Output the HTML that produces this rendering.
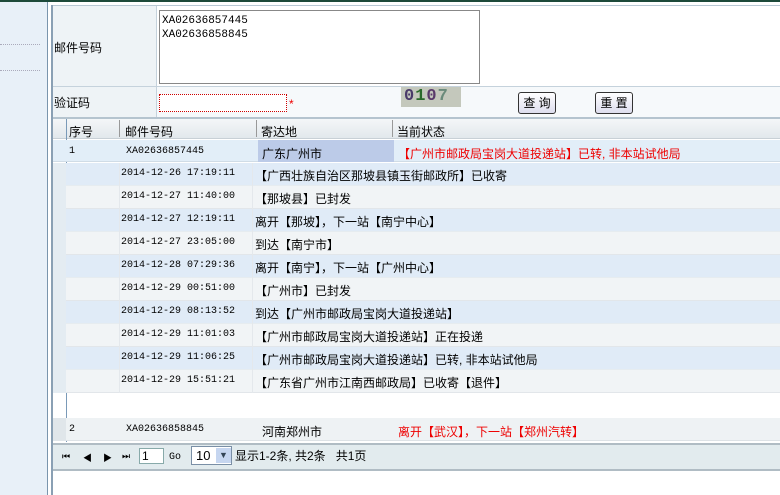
<!DOCTYPE html>
<html><head><meta charset="utf-8"><style>
*{margin:0;padding:0;box-sizing:border-box}
body{width:780px;height:495px;overflow:hidden;background:#fff;font-family:"Liberation Sans","Noto Sans CJK SC",sans-serif;font-size:12px;color:#000;position:relative}
.a{position:absolute}
.mono{font-family:"Liberation Mono","Noto Sans CJK SC",monospace;font-size:10px}
.red{color:#e00}
</style></head><body>
<div class="a" style="left:0;top:0;width:780px;height:2px;background:#1d4a3a"></div>
<div class="a" style="left:0;top:2px;width:47px;height:493px;background:#e8f0f8"></div>
<div class="a" style="left:0;top:44px;width:40px;border-top:1px dotted #aab"></div>
<div class="a" style="left:0;top:70px;width:40px;border-top:1px dotted #aab"></div>
<div class="a" style="left:47px;top:2px;width:1px;height:493px;background:#7a95ad"></div>
<div class="a" style="left:51px;top:5px;width:2px;height:490px;background:#8aa0b4"></div>
<div class="a" style="left:53px;top:5px;width:727px;height:1px;background:#b8c8d4"></div>
<div class="a" style="left:53px;top:6px;width:103px;height:111px;background:#eef3f6"></div>
<div class="a" style="left:156px;top:6px;width:1px;height:111px;background:#c5d2dc"></div>
<div class="a" style="left:53px;top:86px;width:727px;height:1px;background:#c5d2dc"></div>
<div class="a" style="left:157px;top:87px;width:623px;height:30px;background:#f6f9fb"></div>
<div class="a" style="left:54px;top:39px">邮件号码</div>
<div class="a" style="left:54px;top:94px">验证码</div>
<div class="a mono" style="left:159px;top:10px;width:321px;height:74px;border:1px solid #888;background:#fff;padding:3px 2px;line-height:14px;font-size:11px">XA02636857445<br>XA02636858845</div>
<div class="a" style="left:159px;top:94px;width:128px;height:18px;border:1px dotted #c00;background:#fff"></div>
<div class="a red" style="left:289px;top:97px">*</div>
<div class="a" style="left:401px;top:87px;width:60px;height:20px;background:#c4c8bc;font:bold 17px 'Liberation Mono',monospace;letter-spacing:1px;padding-left:3px;line-height:20px"><span style="color:#4a3a6a">0</span><span style="color:#2a6a2a">1</span><span style="color:#5a3a6a">0</span><span style="color:#6a8a7a">7</span></div>
<div class="a" style="left:518px;top:92px;width:38px;height:22px;border:1px solid #333;border-radius:3px;background:linear-gradient(#fff,#dde);text-align:center;line-height:20px">查 询</div>
<div class="a" style="left:595px;top:92px;width:38px;height:22px;border:1px solid #333;border-radius:3px;background:linear-gradient(#fff,#dde);text-align:center;line-height:20px">重 置</div>
<div class="a" style="left:53px;top:117px;width:727px;height:2px;background:#b5c4cf"></div>
<div class="a" style="left:53px;top:119px;width:727px;height:20px;background:linear-gradient(#f4f6f8,#e2e8ec);border-bottom:1px solid #c8d0d6"></div>
<div class="a" style="left:66px;top:119px;width:1px;height:323px;background:#7a9ab8"></div>
<div class="a" style="left:119px;top:120px;width:1px;height:17px;background:#999"></div>
<div class="a" style="left:256px;top:120px;width:1px;height:17px;background:#999"></div>
<div class="a" style="left:392px;top:120px;width:1px;height:17px;background:#999"></div>
<div class="a" style="left:69px;top:123px">序号</div>
<div class="a" style="left:125px;top:123px">邮件号码</div>
<div class="a" style="left:261px;top:123px">寄达地</div>
<div class="a" style="left:397px;top:123px">当前状态</div>
<div class="a" style="left:53px;top:140px;width:727px;height:22px;background:#e2eef8;border-bottom:1px solid #d0dce6"></div>
<div class="a" style="left:258px;top:140px;width:136px;height:22px;background:#bccbe8"></div>
<div class="a mono" style="left:69px;top:146px">1</div>
<div class="a mono" style="left:126px;top:146px">XA02636857445</div>
<div class="a" style="left:262px;top:145px">广东广州市</div>
<div class="a red" style="left:398px;top:145px">【广州市邮政局宝岗大道投递站】已转, 非本站试他局</div>
<div class="a" style="left:53px;top:163px;width:727px">
<div style="height:23px;background:#e0ebf7;border-bottom:1px solid #e6ecf0;position:relative"><span class="a mono" style="left:68px;top:5px">2014-12-26 17:19:11</span><span class="a" style="left:202px;top:4px">【广西壮族自治区那坡县镇玉街邮政所】已收寄</span></div>
<div style="height:23px;background:#f1f4f6;border-bottom:1px solid #e2e6ea;position:relative"><span class="a mono" style="left:68px;top:5px">2014-12-27 11:40:00</span><span class="a" style="left:202px;top:4px">【那坡县】已封发</span></div>
<div style="height:23px;background:#e0ebf7;border-bottom:1px solid #e6ecf0;position:relative"><span class="a mono" style="left:68px;top:5px">2014-12-27 12:19:11</span><span class="a" style="left:202px;top:4px">离开【那坡】，下一站【南宁中心】</span></div>
<div style="height:23px;background:#f1f4f6;border-bottom:1px solid #e2e6ea;position:relative"><span class="a mono" style="left:68px;top:5px">2014-12-27 23:05:00</span><span class="a" style="left:202px;top:4px">到达【南宁市】</span></div>
<div style="height:23px;background:#e0ebf7;border-bottom:1px solid #e6ecf0;position:relative"><span class="a mono" style="left:68px;top:5px">2014-12-28 07:29:36</span><span class="a" style="left:202px;top:4px">离开【南宁】，下一站【广州中心】</span></div>
<div style="height:23px;background:#f1f4f6;border-bottom:1px solid #e2e6ea;position:relative"><span class="a mono" style="left:68px;top:5px">2014-12-29 00:51:00</span><span class="a" style="left:202px;top:4px">【广州市】已封发</span></div>
<div style="height:23px;background:#e0ebf7;border-bottom:1px solid #e6ecf0;position:relative"><span class="a mono" style="left:68px;top:5px">2014-12-29 08:13:52</span><span class="a" style="left:202px;top:4px">到达【广州市邮政局宝岗大道投递站】</span></div>
<div style="height:23px;background:#f1f4f6;border-bottom:1px solid #e2e6ea;position:relative"><span class="a mono" style="left:68px;top:5px">2014-12-29 11:01:03</span><span class="a" style="left:202px;top:4px">【广州市邮政局宝岗大道投递站】正在投递</span></div>
<div style="height:23px;background:#e0ebf7;border-bottom:1px solid #e6ecf0;position:relative"><span class="a mono" style="left:68px;top:5px">2014-12-29 11:06:25</span><span class="a" style="left:202px;top:4px">【广州市邮政局宝岗大道投递站】已转, 非本站试他局</span></div>
<div style="height:23px;background:#f1f4f6;border-bottom:1px solid #e2e6ea;position:relative"><span class="a mono" style="left:68px;top:5px">2014-12-29 15:51:21</span><span class="a" style="left:202px;top:4px">【广东省广州市江南西邮政局】已收寄【退件】</span></div>
</div>
<div class="a" style="left:53px;top:163px;width:13px;height:230px;background:#e4ecf2"></div>
<div class="a" style="left:119px;top:163px;width:1px;height:230px;background:#e4e8ec"></div>
<div class="a" style="left:252px;top:163px;width:1px;height:230px;background:#e4e8ec"></div>
<div class="a" style="left:53px;top:418px;width:727px;height:23px;background:#eef2f4;border-bottom:1px solid #dde2e6"></div>
<div class="a" style="left:53px;top:418px;width:13px;height:23px;background:#e0e6ea"></div>
<div class="a mono" style="left:69px;top:424px">2</div>
<div class="a mono" style="left:126px;top:424px">XA02636858845</div>
<div class="a" style="left:262px;top:423px">河南郑州市</div>
<div class="a red" style="left:398px;top:423px">离开【武汉】，下一站【郑州汽转】</div>
<div class="a" style="left:53px;top:443px;width:727px;height:2px;background:#b0bcc4"></div>
<div class="a" style="left:53px;top:445px;width:727px;height:26px;background:#e2ebee;border-bottom:2px solid #b0bcc4"></div>
<div class="a" style="left:62px;top:451px;font-size:9px">⏮</div>
<div class="a" style="left:83px;top:451px;font-size:9px">◀</div>
<div class="a" style="left:103px;top:451px;font-size:9px">▶</div>
<div class="a" style="left:122px;top:451px;font-size:9px">⏭</div>
<div class="a" style="left:139px;top:448px;width:25px;height:16px;border:1px solid #8aa;background:#fff;padding-left:2px;line-height:14px">1</div>
<div class="a mono" style="left:169px;top:452px">Go</div>
<div class="a" style="left:191px;top:446px;width:41px;height:19px;border:1px solid #7a8fa6;background:#fff;padding-left:4px;line-height:17px;font-size:13px">10</div>
<div class="a" style="left:216px;top:448px;width:15px;height:15px;background:#c6d6f0;color:#345;font-size:9px;text-align:center;line-height:15px">▼</div>
<div class="a" style="left:235px;top:447px">显示1-2条, 共2条&nbsp;&nbsp;&nbsp;共1页</div>
</body></html>
